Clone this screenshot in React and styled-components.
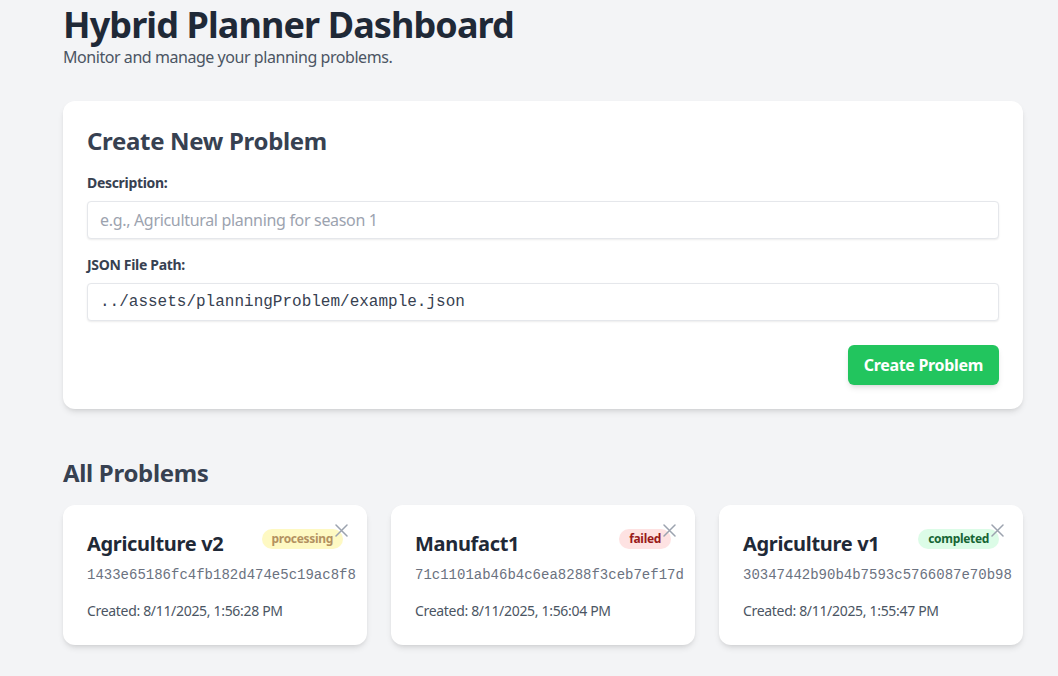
import React from "react";
import styled, { createGlobalStyle } from "styled-components";

const GlobalStyle = createGlobalStyle`
    body {
        margin: 0;
        background: #f3f4f6;
        font-family: "Noto Sans", "Open Sans", sans-serif;
        color: #1f2937;
        letter-spacing: -0.02em;
    }
`;

const Page = styled.div`
    max-width: 960px;
    margin-left: 63px;
    padding: 5px 0 32px;
`;

const Title = styled.h1`
    margin: 0;
    font-size: 36px;
    line-height: 40px;
    font-weight: 700;
    color: #1f2937;
    letter-spacing: -0.025em;
`;

const Subtitle = styled.p`
    margin: 0;
    font-size: 16px;
    line-height: 24px;
    color: #4b5563;
    letter-spacing: -0.028em;
`;

const Panel = styled.div`
    margin-top: 32px;
    background: #fff;
    border-radius: 12px;
    padding: 24px;
    box-shadow: 0 4px 6px -1px rgba(0, 0, 0, 0.1), 0 2px 4px -2px rgba(0, 0, 0, 0.1);
`;

const PanelTitle = styled.h2`
    margin: 0 0 16px;
    font-size: 24px;
    line-height: 32px;
    font-weight: 700;
    color: #374151;
`;

const Field = styled.div`
    margin-bottom: ${(p) => (p.last ? "24px" : "16px")};
`;

const Label = styled.label`
    display: block;
    margin-bottom: 8px;
    font-size: 14px;
    line-height: 20px;
    font-weight: 700;
    color: #374151;
`;

const Input = styled.input`
    box-sizing: border-box;
    width: 100%;
    height: 38px;
    padding: 0 12px;
    border: 1px solid #e5e7eb;
    border-radius: 4px;
    box-shadow: 0 1px 2px rgba(0, 0, 0, 0.08);
    font-size: 16px;
    color: #374151;
    font-family: ${(p) =>
        p.mono ? '"Liberation Mono", monospace' : '"Noto Sans", sans-serif'};
    letter-spacing: ${(p) => (p.mono ? "0" : "-0.02em")};
    outline: none;

    &::placeholder {
        color: #9ca3af;
    }
`;

const Actions = styled.div`
    display: flex;
    justify-content: flex-end;
`;

const Button = styled.button`
    height: 40px;
    padding: 0 16px;
    border: none;
    border-radius: 6px;
    background: #22c55e;
    color: #fff;
    font-family: "Noto Sans", sans-serif;
    font-size: 16px;
    font-weight: 700;
    letter-spacing: -0.02em;
    box-shadow: 0 4px 6px -1px rgba(0, 0, 0, 0.1), 0 2px 4px -2px rgba(0, 0, 0, 0.1);
    cursor: pointer;
`;

const SectionTitle = styled.h2`
    margin: 48px 0 16px;
    font-size: 24px;
    line-height: 32px;
    font-weight: 700;
    color: #374151;
`;

const Grid = styled.div`
    display: grid;
    grid-template-columns: repeat(3, minmax(0, 1fr));
    gap: 24px;
`;

const Card = styled.div`
    position: relative;
    background: #fff;
    border-radius: 12px;
    padding: 24px;
    box-shadow: 0 4px 6px -1px rgba(0, 0, 0, 0.1), 0 2px 4px -2px rgba(0, 0, 0, 0.1);
`;

const CardHead = styled.div`
    display: flex;
    justify-content: space-between;
    align-items: flex-start;
    margin-bottom: 8px;
`;

const CardTitle = styled.h3`
    margin: 1px 0 0;
    font-size: 20px;
    line-height: 28px;
    font-weight: 700;
    color: #1f2937;
`;

const badgeColors = {
    processing: { bg: "#fef9c3", fg: "#b39160" },
    failed: { bg: "#fee2e2", fg: "#991b1b" },
    completed: { bg: "#dcfce7", fg: "#166534" },
};

const Badge = styled.span`
    padding: 2px 10px;
    border-radius: 999px;
    font-size: 12px;
    line-height: 16px;
    font-weight: 700;
    background: ${(p) => badgeColors[p.status].bg};
    color: ${(p) => badgeColors[p.status].fg};
`;

const CloseButton = styled.button`
    position: absolute;
    top: 19px;
    right: 19px;
    padding: 0;
    border: none;
    background: none;
    display: flex;
    color: #9ca3af;
    cursor: pointer;
`;

const Hash = styled.div`
    margin-top: -1px;
    font-family: "Liberation Mono", monospace;
    font-size: 14px;
    line-height: 20px;
    color: #6b7280;
    letter-spacing: 0;
    white-space: nowrap;
`;

const Created = styled.div`
    margin-top: 16px;
    font-size: 14px;
    line-height: 20px;
    color: #4b5563;
`;

const problems = [
    {
        name: "Agriculture v2",
        status: "processing",
        id: "1433e65186fc4fb182d474e5c19ac8f8",
        created: "8/11/2025, 1:56:28 PM",
    },
    {
        name: "Manufact1",
        status: "failed",
        id: "71c1101ab46b4c6ea8288f3ceb7ef17d",
        created: "8/11/2025, 1:56:04 PM",
    },
    {
        name: "Agriculture v1",
        status: "completed",
        id: "30347442b90b4b7593c5766087e70b98",
        created: "8/11/2025, 1:55:47 PM",
    },
];

export default function App() {
    return (
        <>
            <GlobalStyle />
            <Page>
                <Title>Hybrid Planner Dashboard</Title>
                <Subtitle>Monitor and manage your planning problems.</Subtitle>

                <Panel>
                    <PanelTitle>Create New Problem</PanelTitle>
                    <Field>
                        <Label>Description:</Label>
                        <Input placeholder="e.g., Agricultural planning for season 1" />
                    </Field>
                    <Field last>
                        <Label>JSON File Path:</Label>
                        <Input mono defaultValue="../assets/planningProblem/example.json" />
                    </Field>
                    <Actions>
                        <Button>Create Problem</Button>
                    </Actions>
                </Panel>

                <SectionTitle>All Problems</SectionTitle>
                <Grid>
                    {problems.map((p) => (
                        <Card key={p.id}>
                            <CloseButton aria-label="Delete">
                                <svg width="13" height="13" viewBox="0 0 13 13">
                                    <path
                                        d="M1 1L12 12M12 1L1 12"
                                        stroke="currentColor"
                                        strokeWidth="1.5"
                                        strokeLinecap="round"
                                    />
                                </svg>
                            </CloseButton>
                            <CardHead>
                                <CardTitle>{p.name}</CardTitle>
                                <Badge status={p.status}>{p.status}</Badge>
                            </CardHead>
                            <Hash>{p.id}</Hash>
                            <Created>Created: {p.created}</Created>
                        </Card>
                    ))}
                </Grid>
            </Page>
        </>
    );
}
